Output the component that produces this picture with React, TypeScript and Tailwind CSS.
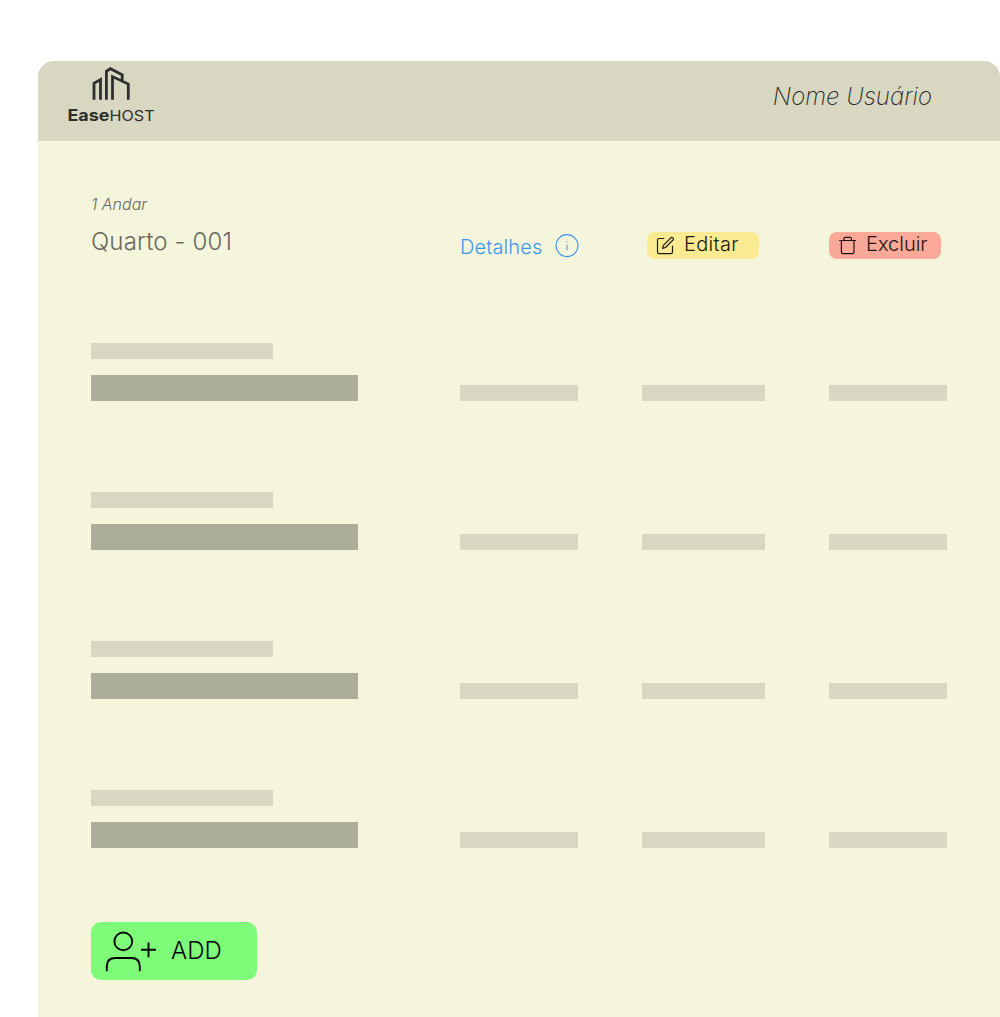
const rows = [0, 1, 2, 3];

function Logo() {
  return (
    <svg width="90" height="62" viewBox="66 64 90 62" className="block shrink-0" fill="none">
      <g stroke="#2f302e" strokeWidth="2.8">
        <path d="M94 99.8V83.2L100.5 79.6V99.8" />
        <path d="M106.4 99.8V71.2L110.4 68.7L122.2 74.8V80.6" />
        <path d="M112.5 99.8V76.6L128.3 84.1V99.8" />
      </g>
      <text x="67.4" y="121.3" fill="#2f302e" fontSize="16" fontWeight="650" textLength="42" lengthAdjust="spacingAndGlyphs" className="font-['Inter',sans-serif]">Ease</text>
      <text x="109.6" y="121.3" fill="#2f302e" fontSize="14.8" fontWeight="400" textLength="45" lengthAdjust="spacingAndGlyphs" className="font-['Inter',sans-serif]">HOST</text>
    </svg>
  );
}

function InfoIcon() {
  return (
    <svg width="24" height="24" viewBox="0 0 24 24" fill="none" stroke="#3b97ee" className="block">
      <circle cx="12" cy="11.6" r="11" strokeWidth="1.1" />
      <path d="M12 10.6V16.2" strokeWidth="1" />
      <path d="M12 7.2V8.3" strokeWidth="1.2" />
    </svg>
  );
}

function EditIcon() {
  return (
    <svg width="20" height="20" viewBox="0 0 20 20" fill="none" stroke="#1d1c12" strokeWidth="1.2" strokeLinecap="round" strokeLinejoin="round" className="block">
      <path d="M8.8 3.5H4.1Q2.5 3.5 2.5 5.1V17Q2.5 18.6 4.1 18.6H15.9Q17.5 18.6 17.5 17V11" />
      <path d="M7.6 13.4L8.4 10.3L15.8 2.8Q16.8 1.9 17.9 2.9Q18.9 4 18 5L10.5 12.5Z" />
    </svg>
  );
}

function TrashIcon() {
  return (
    <svg width="20" height="20" viewBox="0 0 20 20" fill="none" stroke="#1d1411" strokeWidth="1.2" strokeLinecap="round" strokeLinejoin="round" className="block">
      <path d="M1.6 5.5H17.6M3.4 5.5V17Q3.4 18.6 5 18.6H14.4Q16 18.6 16 17V5.5M5.9 5.5V3.8Q5.9 2.4 7.3 2.4H12Q13.4 2.4 13.4 3.8V5.5" />
    </svg>
  );
}

function AddUserIcon() {
  return (
    <svg width="52" height="42" viewBox="0 0 52 42" fill="none" stroke="#050505" strokeWidth="1.9" strokeLinecap="round" className="block shrink-0">
      <circle cx="18.3" cy="10.4" r="8.9" />
      <path d="M1.8 39.4V35.5Q1.8 27 10.3 27H26.3Q34.8 27 34.8 35.5V39.4M43.5 12.1V25.5M36.8 18.8H50.2" />
    </svg>
  );
}

export default function App() {
  return (
    <div className="h-[1017px] w-[1000px] overflow-hidden bg-white pt-[61px] pl-[37.5px] font-['Inter',sans-serif]">
      <div className="h-full overflow-hidden rounded-t-[16px] bg-[#f5f5dc]">
        <header className="flex h-[79.5px] justify-between bg-[#d8d7c1] pt-[3px] pr-[68px] pl-[28.5px]">
          <Logo />
          <span className="mt-[17px] text-[24px] leading-8 font-extralight text-[#2a2b26] italic">Nome Usuário</span>
        </header>
        <main className="pl-[53.5px]">
          <div className="grid h-[202.5px] grid-cols-[369px_187px_182px_auto] pt-[53.5px]">
            <div>
              <p className="h-5 text-[16px] leading-5 font-light text-[#686860] italic">1 Andar</p>
              <p className="mt-3 text-[24px] leading-8 font-light tracking-[0.15px] text-[#686860]">Quarto - 001</p>
            </div>
            <a className="mt-10 flex h-6 gap-[13px] text-[20px] leading-[26px] font-light tracking-[0.12px] text-[#3b97ee]">
              Detalhes
              <InfoIcon />
            </a>
            <button className="mt-[38px] flex h-[27px] w-[112px] rounded-lg bg-[#faea91] pt-[3px] pl-2 text-[20px] leading-[19px] font-light tracking-[0.3px] text-[#1d1c12]">
              <EditIcon />
              <span className="ml-[9px]">Editar</span>
            </button>
            <button className="mt-[38px] flex h-[27px] w-[112px] rounded-lg bg-[#faa998] pt-[3px] pl-[9px] text-[20px] leading-[19px] font-light text-[#1d1411]">
              <TrashIcon />
              <span className="ml-2">Excluir</span>
            </button>
          </div>
          {rows.map((row) => (
            <div key={row} className="grid h-[149px] grid-cols-[369px_182px_187px_auto]">
              <div>
                <div className="h-4 w-[182px] bg-[#d8d7c1]" />
                <div className="mt-4 h-[26px] w-[267px] bg-[#acad9a]" />
              </div>
              <div className="mt-[42px] h-4 w-[118px] bg-[#d8d7c1]" />
              <div className="mt-[42px] h-4 w-[123px] bg-[#d8d7c1]" />
              <div className="mt-[42px] h-4 w-[118px] bg-[#d8d7c1]" />
            </div>
          ))}
          <button className="-mt-[17px] flex h-[58px] w-[166px] rounded-[10px] bg-[#7dfb79] pt-[9px] pl-[14px] text-[24px] leading-[39px] text-[#050505]">
            <AddUserIcon />
            <span className="ml-[14px] font-light">ADD</span>
          </button>
        </main>
      </div>
    </div>
  );
}
